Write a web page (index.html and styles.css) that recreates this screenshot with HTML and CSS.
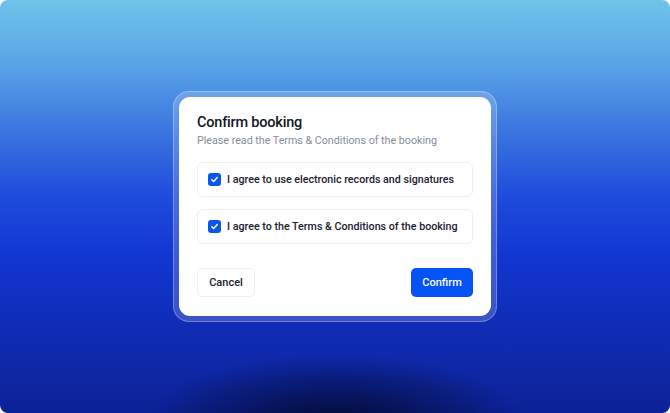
FILE: index.html
```html
<!DOCTYPE html>
<html lang="en">
<head>
  <meta charset="UTF-8">
  <title>Confirm booking</title>
  <meta name="viewport" content="width=device-width, initial-scale=1.0">
  <link rel="stylesheet" href="styles.css">
</head>
<body>
  <div class="scene">
    <div class="frame">
      <div class="dialog">
        <h1 class="title">Confirm booking</h1>
        <p class="subtitle">Please read the Terms &amp; Conditions of the booking</p>

        <div class="options">
          <label class="option">
            <span class="check">
              <svg width="9" height="9" viewBox="0 0 10 10"><path d="M2 5.2 L4.1 7.2 L8 2.8" fill="none" stroke="#fff" stroke-width="1.6" stroke-linecap="round" stroke-linejoin="round"/></svg>
            </span>
            I agree to use electronic records and signatures
          </label>
          <label class="option">
            <span class="check">
              <svg width="9" height="9" viewBox="0 0 10 10"><path d="M2 5.2 L4.1 7.2 L8 2.8" fill="none" stroke="#fff" stroke-width="1.6" stroke-linecap="round" stroke-linejoin="round"/></svg>
            </span>
            I agree to the Terms &amp; Conditions of the booking
          </label>
        </div>

        <div class="actions">
          <button class="btn btn-cancel">Cancel</button>
          <button class="btn btn-confirm">Confirm</button>
        </div>
      </div>
    </div>
  </div>
</body>
</html>
```

FILE: styles.css
```css
body {
  margin: 0;
  background: #fff;
  font-family: Roboto, "Noto Sans", sans-serif;
}

.scene {
  width: 670px;
  height: 413px;
  border-radius: 8px;
  overflow: hidden;
  display: flex;
  align-items: center;
  justify-content: center;
  background:
    radial-gradient(ellipse 28% 16% at 50% 102%, rgba(3, 10, 50, 0.95), rgba(3, 10, 50, 0)),
    linear-gradient(180deg, #6fc4ea 0%, #58a3e6 16%, #3a74e0 32%, #1e4bdb 48%, #1336d2 62%, #0f2cb4 80%, #0c2296 100%);
}

.frame {
  padding: 5px;
  border: 1px solid rgba(255, 255, 255, 0.28);
  border-radius: 16px;
  background: rgba(255, 255, 255, 0.18);
}

.dialog {
  width: 276px;
  padding: 16px 18px 19px;
  background: #fff;
  border-radius: 11px;
}

.title {
  margin: 0;
  font-size: 14.5px;
  line-height: 20px;
  font-weight: 500;
  color: #111622;
  letter-spacing: -0.2px;
}

.subtitle {
  margin: 1px 0 0;
  font-size: 10.7px;
  line-height: 14px;
  color: #858d9c;
}

.options {
  margin-top: 14px;
  display: flex;
  flex-direction: column;
  gap: 12px;
}

.option {
  height: 33px;
  display: flex;
  align-items: center;
  gap: 6px;
  padding: 0 10px;
  border: 1px solid #eceef2;
  border-radius: 6px;
  font-size: 10.7px;
  font-weight: 500;
  color: #1b2030;
  white-space: nowrap;
}

.check {
  flex: none;
  width: 13px;
  height: 13px;
  border-radius: 3px;
  background: #0c56f0;
  display: flex;
  align-items: center;
  justify-content: center;
}

.actions {
  margin-top: 24px;
  display: flex;
  justify-content: space-between;
}

.btn {
  height: 29px;
  padding: 0;
  border-radius: 5px;
  font-family: inherit;
  font-size: 11px;
  font-weight: 500;
  cursor: pointer;
}

.btn-cancel {
  width: 58px;
  background: #fff;
  color: #1b2030;
  border: 1px solid #eceef2;
}

.btn-confirm {
  width: 62px;
  background: #0552f5;
  color: #fff;
  border: none;
}
```
